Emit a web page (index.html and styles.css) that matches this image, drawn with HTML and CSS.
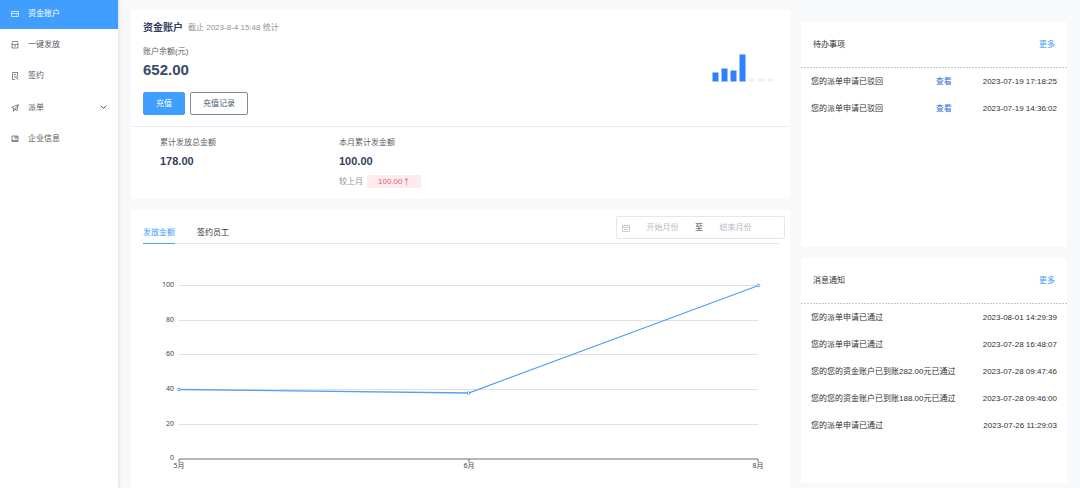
FILE: index.html
```html
<!DOCTYPE html>
<html lang="zh-CN">
<head>
<meta charset="utf-8">
<title>资金账户</title>
<link rel="stylesheet" href="styles.css">
</head>
<body>
<div class="app">
  <nav class="sidebar">
    <a class="nav-item nav-active" href="#">
      <svg class="icon" viewBox="0 0 8 8"><path d="M.5 1.500h7v5h-7zM.5 3.500h7M5 5h1"/></svg>
      <span>资金账户</span>
    </a>
    <div class="nav-rest">
      <a class="nav-item" href="#">
        <svg class="icon" viewBox="0 0 8 8"><path d="M1.500 .5h5l.5 2.500v4H1V3zM1 3.500h6M3 5h2"/></svg>
        <span>一键发放</span>
      </a>
      <a class="nav-item" href="#">
        <svg class="icon" viewBox="0 0 8 8"><path d="M6.500 4V.5h-5v7H4M3 2.500h2M3 4.500h1"/><circle cx="5.500" cy="5.500" r="1"/><path d="M6.200 6.200l1 1.300"/></svg>
        <span>签约</span>
      </a>
      <a class="nav-item" href="#">
        <svg class="icon" viewBox="0 0 8 8"><path d="M7.300 .7L.7 3.300l1.800 1.200L6 6.500zM2.500 4.500v2.800L4 5.500M7.300 .7L4 5.300"/></svg>
        <span>派单</span>
        <svg class="chevron" viewBox="0 0 8 8"><path d="M1 2l3 3 3-3"/></svg>
      </a>
      <a class="nav-item" href="#">
        <svg class="icon" viewBox="0 0 8 8"><path d="M1 1h6v5.500H1zM4 1v2.500l1-.6 1 .6V1M1 5.500h6"/></svg>
        <span>企业信息</span>
      </a>
    </div>
  </nav>

  <main class="main">
    <section class="card account">
      <div class="account-top">
        <div>
          <div class="account-head">
            <h1 class="account-title">资金账户</h1>
            <span class="muted">截止 2023-8-4 15:48 统计</span>
          </div>
          <div class="label">账户余额(元)</div>
          <div class="balance">652.00</div>
          <div class="actions">
            <button class="btn btn-primary" type="button">充值</button>
            <button class="btn" type="button">充值记录</button>
          </div>
        </div>
        <svg class="bars" viewBox="0 0 62 28">
          <g class="bar-on"><rect x="0.500" y="18.500" width="6" height="9"/><rect x="9.500" y="14.500" width="6" height="13"/><rect x="18.500" y="16.500" width="6" height="11"/><rect x="27.500" y="0.500" width="6" height="27"/></g>
          <g class="bar-off"><rect x="37" y="24.500" width="6" height="3" rx="1"/><rect x="46" y="24.500" width="6" height="3" rx="1"/><rect x="55" y="24.500" width="6" height="3" rx="1"/></g>
        </svg>
      </div>
      <div class="stats">
        <div>
          <div class="label">累计发放总金额</div>
          <div class="stat-value">178.00</div>
        </div>
        <div>
          <div class="label">本月累计发金额</div>
          <div class="stat-value">100.00</div>
          <div class="compare"><span class="muted">较上月</span><span class="tag">100.00<span class="arrow">↑</span></span></div>
        </div>
      </div>
    </section>

    <section class="card trend">
      <div class="trend-head">
        <div class="tabs" role="tablist">
          <button class="tab tab-active" type="button" role="tab" aria-selected="true">发放金额</button>
          <button class="tab" type="button" role="tab" aria-selected="false">签约员工</button>
        </div>
        <div class="range">
          <svg class="icon" viewBox="0 0 8 8"><path d="M.5 1.500h7v6h-7zM.5 3.500h7M2.500 .5v1M5.500 .5v1M2 5.500h4"/></svg>
          <input class="range-input" type="text" placeholder="开始月份" aria-label="开始月份">
          <span>至</span>
          <input class="range-input" type="text" placeholder="结束月份" aria-label="结束月份">
        </div>
      </div>
      <svg class="chart" viewBox="0 0 659 238" role="img" aria-label="发放金额">
        <path class="grid-line" d="M48 36.500H627M48 71.500H627M48 105.500H627M48 140.500H627M48 175.500H627"/>
        <path class="axis" d="M48 210H627M48 210v3M338 210v3M627 210v3"/>
        <g class="axis-text y-text">
          <text x="43" y="38">100</text><text x="43" y="73">80</text><text x="43" y="107">60</text><text x="43" y="142">40</text><text x="43" y="177">20</text><text x="43" y="211">0</text>
        </g>
        <g class="axis-text x-text">
          <text x="48" y="219">5月</text><text x="338" y="219">6月</text><text x="627" y="219">8月</text>
        </g>
        <path class="series" d="M48 140.500L337.500 144 627.500 36.500"/>
        <g class="points"><circle cx="48" cy="140.500" r="1.300"/><circle cx="337.500" cy="144" r="1.300"/><circle cx="627.500" cy="36.500" r="1.300"/></g>
      </svg>
    </section>
  </main>

  <aside class="side">
    <section class="card list-card">
      <div class="list-head"><h2 class="list-title">待办事项</h2><a class="more" href="#">更多</a></div>
      <ul class="list">
        <li><span class="message">您的派单申请已驳回</span><a class="view" href="#">查看</a><time>2023-07-19 17:18:25</time></li>
        <li><span class="message">您的派单申请已驳回</span><a class="view" href="#">查看</a><time>2023-07-19 14:36:02</time></li>
      </ul>
    </section>
    <section class="card list-card">
      <div class="list-head"><h2 class="list-title">消息通知</h2><a class="more" href="#">更多</a></div>
      <ul class="list">
        <li><span class="message">您的派单申请已通过</span><time>2023-08-01 14:29:39</time></li>
        <li><span class="message">您的派单申请已通过</span><time>2023-07-28 16:48:07</time></li>
        <li><span class="message">您的您的资金账户已到账282.00元已通过</span><time>2023-07-28 09:47:46</time></li>
        <li><span class="message">您的您的资金账户已到账188.00元已通过</span><time>2023-07-28 09:46:00</time></li>
        <li><span class="message">您的派单申请已通过</span><time>2023-07-26 11:29:03</time></li>
      </ul>
    </section>
  </aside>
</div>
</body>
</html>
```
FILE: styles.css
```css
* { box-sizing: border-box; }
body {
  margin: 0;
  background: #f8f9fb;
  color: #303133;
  font-family: "Liberation Sans", "Noto Sans CJK SC", sans-serif;
  font-size: 8px;
  line-height: 12px;
}
h1, h2, ul { margin: 0; padding: 0; font-weight: normal; }
ul { list-style: none; }
a { color: inherit; text-decoration: none; }
button, input { font: inherit; color: inherit; }

.app {
  display: grid;
  grid-template-columns: 118px minmax(0, 1fr) 266px;
  min-height: 100vh;
  padding-right: 13px;
}
.card { background: #fff; border-radius: 2px; }
.label { color: #606266; }
.muted { color: #909399; }

.sidebar { background: #fff; box-shadow: 1px 0 4px rgba(0, 21, 41, 0.12); }
.nav-item {
  display: flex;
  align-items: center;
  gap: 9px;
  padding: 0 11px;
  color: #55585e;
}
.nav-active { height: 29px; padding-bottom: 2px; background: #409eff; color: #fff; }
.nav-rest { display: grid; grid-auto-rows: 1fr; height: 126px; }
.icon { width: 8px; height: 8px; fill: none; stroke: currentColor; stroke-width: 0.7; flex: none; }
.chevron { width: 7px; height: 7px; margin-left: auto; fill: none; stroke: #303133; }

.main {
  display: flex;
  flex-direction: column;
  gap: 11px;
  padding: 10px 11px 0 13px;
}
.account-top {
  display: flex;
  justify-content: space-between;
  padding: 10px 16px 11px 12px;
  border-bottom: 1px solid #ebeef5;
}
.account-head { display: flex; align-items: center; gap: 5px; height: 16px; margin-bottom: 10px; }
.account-title { font-size: 10px; font-weight: bold; color: #303f5c; }
.balance { font-size: 15px; font-weight: bold; line-height: 24px; color: #3b4a66; }
.actions { display: flex; gap: 5px; margin-top: 10px; }
.btn {
  height: 23px;
  padding: 0 12px;
  border: 1px solid #7d889c;
  border-radius: 2px;
  background: #fff;
  color: #4b586e;
}
.btn-primary { border-color: #409eff; background: #409eff; color: #fff; }
.bars { width: 62px; height: 28px; margin-top: 34px; }
.bar-on { fill: #2f80ff; }
.bar-off { fill: #eceffc; }
.stats {
  display: grid;
  grid-template-columns: 179px 1fr;
  padding: 10px 29px 11px;
}
.stat-value { font-size: 11px; font-weight: bold; line-height: 24px; color: #303f5c; }
.compare { display: flex; align-items: center; gap: 4px; margin-top: 2px; }
.tag { display: flex; padding: 0 11px; line-height: 13px; background: #fdebed; color: #dc6671; }
.arrow { font-family: "Noto Sans CJK SC", sans-serif; }

.trend { flex: 1; }
.trend-head {
  display: flex;
  justify-content: space-between;
  height: 34px;
  padding: 6px 5px 0 12px;
  background: linear-gradient(#e4e7ed, #e4e7ed) 12px 100% / calc(100% - 23px) 1px no-repeat;
}
.tabs { display: flex; gap: 22px; }
.tab { padding: 6px 0 0; border: 0; border-bottom: 1px solid transparent; background: none; }
.tab-active { border-bottom: 1px solid #409eff; color: #409eff; }
.range {
  display: flex;
  align-items: center;
  width: 169px;
  height: 23px;
  padding: 0 5px;
  border: 1px solid #e4e7ed;
  border-radius: 2px;
  color: #303133;
}
.range .icon { color: #b4b8c0; }
.range-input { width: 65px; padding: 0; border: 0; outline: 0; background: none; text-align: center; }
.range-input::placeholder { color: #b8bcc4; }

.chart { display: block; width: 100%; height: auto; margin-top: 5px; }
.grid-line { fill: none; stroke: #e0e0e0; }
.axis { fill: none; stroke: #6e7079; }
.axis-text { fill: #464646; font-family: "Noto Sans", "Noto Sans CJK SC", sans-serif; font-size: 7px; }
.y-text { text-anchor: end; }
.x-text { text-anchor: middle; }
.series { fill: none; stroke: #559ff5; stroke-width: 1.3; }
.points { fill: #fff; stroke: #409eff; }

.side {
  display: flex;
  flex-direction: column;
  gap: 11px;
  padding: 22px 0 5px;
}
.list-card { min-height: 225px; }
.list-head {
  display: flex;
  justify-content: space-between;
  align-items: center;
  height: 46px;
  padding: 0 12px;
  background: repeating-linear-gradient(90deg, #c8c8c8 0 2px, #fff 2px 3px) 0 100% / 100% 1px no-repeat;
}
.list-title { font-size: 8px; }
.more { color: #409eff; }
.list li { display: flex; align-items: center; height: 27px; padding: 0 10px; }
.message { flex: 1; }
.view { margin-right: 31px; color: #2f6fe4; }
```
